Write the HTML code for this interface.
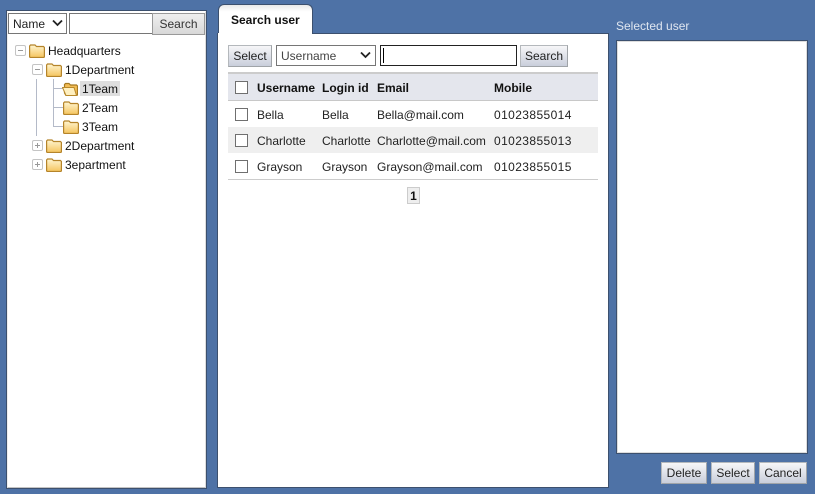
<!DOCTYPE html>
<html><head><meta charset="utf-8">
<style>
html,body{margin:0;padding:0}
body{width:815px;height:494px;overflow:hidden;background:#4e72a6;position:relative;font-family:"Liberation Sans",sans-serif;font-size:12px;color:#222}
.a{position:absolute;box-sizing:border-box}
.t{position:absolute;white-space:nowrap;line-height:16px}
.b{font-weight:bold;color:#111}
.n{letter-spacing:.4px}
.btn{position:absolute;box-sizing:border-box;border:1px solid #b4b8bc;border-right-color:#a0a4a8;border-bottom-color:#a0a4a8;background:linear-gradient(#f6f6f8,#c9cedb);text-align:center;color:#222;line-height:20px;height:22px}
.cb{position:absolute;box-sizing:border-box;width:13px;height:13px;border:1px solid #6f6f6f;background:#fff;left:235px}
svg{position:absolute;overflow:visible}
.pm{position:absolute;box-sizing:border-box;width:11px;height:11px;border:1px solid #c4c4c4;border-radius:2px;background:#fff}
.pm:before{content:"";position:absolute;left:2px;top:4px;width:5px;height:1px;background:#999}
.pm.p:after{content:"";position:absolute;left:4px;top:2px;width:1px;height:5px;background:#999}
.l{position:absolute;background:#b4bac8}
</style></head><body>
<svg width="0" height="0" style="position:absolute"><defs>
<linearGradient id="g" x1="0" y1="0" x2="0" y2="1"><stop offset="0" stop-color="#fff6d2"/><stop offset="1" stop-color="#f5c45e"/></linearGradient>
<symbol id="f" viewBox="0 0 16 14"><path d="M.6 13V2L1.500 1H6L7.500 2.500H14.500L15.400 3.500V13L14.500 13.500H1.500Z" fill="url(#g)" stroke="#b5842a" stroke-width="1.200"/></symbol>
<symbol id="o" viewBox="0 0 16 14"><path d="M2.500 11V2.500L3.500 1.500H7L8.500 3H14.500L15.500 4V13L14.500 13.500H4Z" fill="#f3bd55" stroke="#a67a22" stroke-width="1.200"/><path d="M.5 5.500H12L14.500 13.500H4Z" fill="#fff0c0" stroke="#b98a2c"/></symbol>
</defs></svg>

<!-- left panel -->
<div class="a" style="left:6px;top:10px;width:201px;height:479px;background:#fff;border:1px solid #3c506e"></div>
<div class="a" style="left:7px;top:11px;width:199px;height:477px;border:1px solid #c4c4c4;border-top-color:#fff;border-left-color:#eee;border-right-color:#ddd"></div>
<div class="a" style="left:8px;top:13px;width:59px;height:21px;border:1px solid #767676;background:#fff"></div>
<div class="t" style="left:13px;top:16px">Name</div>
<svg style="left:52px;top:19px" width="11" height="8"><path d="M1 1.500L5.500 6L10 1.500" fill="none" stroke="#222" stroke-width="1.800"/></svg>
<div class="a" style="left:69px;top:13px;width:84px;height:21px;border:1px solid #767676;background:#fff"></div>
<div class="a" style="left:152px;top:13px;width:53px;height:22px;border:1px solid #999;background:linear-gradient(#efefef,#d8d8d8);text-align:center;line-height:20px;color:#333">Search</div>

<!-- tree -->
<div class="l" style="left:36px;top:79px;width:1px;height:57px"></div>
<div class="l" style="left:53px;top:79px;width:1px;height:47px"></div>
<div class="l" style="left:53px;top:88px;width:10px;height:1px"></div>
<div class="l" style="left:53px;top:107px;width:10px;height:1px"></div>
<div class="l" style="left:53px;top:126px;width:10px;height:1px"></div>
<div class="pm" style="left:15px;top:45px"></div>
<div class="pm" style="left:32px;top:64px"></div>
<div class="pm p" style="left:32px;top:140px"></div>
<div class="pm p" style="left:32px;top:159px"></div>
<svg style="left:29px;top:44px" width="16" height="14"><use href="#f"/></svg>
<svg style="left:46px;top:63px" width="16" height="14"><use href="#f"/></svg>
<svg style="left:62px;top:82px" width="16" height="14"><use href="#o"/></svg>
<svg style="left:63px;top:101px" width="16" height="14"><use href="#f"/></svg>
<svg style="left:63px;top:120px" width="16" height="14"><use href="#f"/></svg>
<svg style="left:46px;top:139px" width="16" height="14"><use href="#f"/></svg>
<svg style="left:46px;top:158px" width="16" height="14"><use href="#f"/></svg>
<div class="a" style="left:80px;top:81px;width:40px;height:15px;background:#dedede"></div>
<div class="t" style="left:48px;top:43px;color:#111">Headquarters</div>
<div class="t" style="left:65px;top:62px;color:#111">1Department</div>
<div class="t" style="left:82px;top:81px;color:#111">1Team</div>
<div class="t" style="left:82px;top:100px;color:#111">2Team</div>
<div class="t" style="left:82px;top:119px;color:#111">3Team</div>
<div class="t" style="left:65px;top:138px;color:#111">2Department</div>
<div class="t" style="left:65px;top:157px;color:#111">3epartment</div>

<!-- main -->
<div class="a" style="left:217px;top:33px;width:392px;height:455px;background:#fff;border:1px solid #3c506e;border-top:0"></div>
<div class="a" style="left:218px;top:4px;width:95px;height:31px;background:linear-gradient(#e9e9e9,#fff 22%);border:1px solid #3c506e;border-bottom:0;border-radius:6px 6px 0 0"></div>
<div class="a" style="left:218px;top:33px;width:390px;height:3px;background:#fff"></div>
<div class="a" style="left:312px;top:33px;width:297px;height:1px;background:#3c506e"></div>
<div class="t b" style="left:231px;top:12px">Search user</div>

<div class="btn" style="left:228px;top:45px;width:44px">Select</div>
<div class="a" style="left:276px;top:45px;width:100px;height:21px;border:1px solid #767676;background:#fff"></div>
<div class="t" style="left:281px;top:48px;color:#444">Username</div>
<svg style="left:360px;top:51px" width="11" height="8"><path d="M1 1.500L5.500 6L10 1.500" fill="none" stroke="#222" stroke-width="1.800"/></svg>
<div class="a" style="left:380px;top:45px;width:137px;height:21px;border:1px solid #222;background:#fff"></div>
<div class="a" style="left:383px;top:48px;width:1px;height:15px;background:#000"></div>
<div class="btn" style="left:520px;top:45px;width:48px">Search</div>

<div class="a" style="left:228px;top:72px;width:370px;height:29px;background:#e4e6ed;border-top:2px solid #ccc;border-bottom:1px solid #c8c8c8"></div>
<div class="a" style="left:228px;top:127px;width:370px;height:26px;background:#efefef"></div>
<div class="a" style="left:228px;top:179px;width:370px;height:1px;background:#ccc"></div>

<div class="cb" style="top:81px"></div>
<div class="cb" style="top:108px"></div>
<div class="cb" style="top:134px"></div>
<div class="cb" style="top:160px"></div>

<div class="t b" style="left:257px;top:80px">Username</div>
<div class="t b" style="left:322px;top:80px">Login id</div>
<div class="t b" style="left:377px;top:80px">Email</div>
<div class="t b" style="left:494px;top:80px">Mobile</div>

<div class="t" style="left:257px;top:107px">Bella</div>
<div class="t" style="left:322px;top:107px">Bella</div>
<div class="t" style="left:377px;top:107px">Bella@mail.com</div>
<div class="t n" style="left:494px;top:107px">01023855014</div>

<div class="t" style="left:257px;top:133px">Charlotte</div>
<div class="t" style="left:322px;top:133px">Charlotte</div>
<div class="t" style="left:377px;top:133px">Charlotte@mail.com</div>
<div class="t n" style="left:494px;top:133px">01023855013</div>

<div class="t" style="left:257px;top:159px">Grayson</div>
<div class="t" style="left:322px;top:159px">Grayson</div>
<div class="t" style="left:377px;top:159px">Grayson@mail.com</div>
<div class="t n" style="left:494px;top:159px">01023855015</div>

<div class="a b" style="left:407px;top:187px;width:13px;height:17px;border:1px solid #ccc;background:#eee;text-align:center;line-height:16px">1</div>

<!-- right -->
<div class="t" style="left:616px;top:18px;color:#dfe6f0">Selected user</div>
<div class="a" style="left:616px;top:40px;width:192px;height:414px;background:#fff;border:1px solid #3c506e"></div>
<div class="a" style="left:617px;top:41px;width:190px;height:412px;border:1px solid #ddd"></div>
<div class="btn" style="left:661px;top:462px;width:46px">Delete</div>
<div class="btn" style="left:711px;top:462px;width:44px">Select</div>
<div class="btn" style="left:759px;top:462px;width:48px">Cancel</div>
</body></html>
